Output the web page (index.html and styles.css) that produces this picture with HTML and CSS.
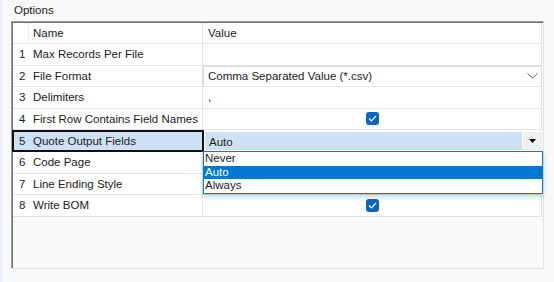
FILE: index.html
```html
<!DOCTYPE html>
<html>
<head>
    <title>Options</title>
    <link rel="stylesheet" href="styles.css">
</head>
<body>
    <div class="panel">
        <div class="caption">Options</div>
        <div class="grid">
            <div class="row head">
                <div class="num"></div>
                <div class="name">Name</div>
                <div class="value">Value</div>
            </div>
            <div class="row">
                <div class="num">1</div>
                <div class="name">Max Records Per File</div>
                <div class="value"></div>
            </div>
            <div class="row">
                <div class="num">2</div>
                <div class="name">File Format</div>
                <div class="value combo">
                    <span>Comma Separated Value (*.csv)</span>
                    <svg class="chevron" width="11" height="6" viewBox="0 0 11 6"><polyline points="0.5,0.5 5.5,5 10.5,0.5" fill="none" stroke="#606060" stroke-width="1"/></svg>
                </div>
            </div>
            <div class="row">
                <div class="num">3</div>
                <div class="name">Delimiters</div>
                <div class="value">,</div>
            </div>
            <div class="row">
                <div class="num">4</div>
                <div class="name">First Row Contains Field Names</div>
                <div class="value center"><span class="check"><svg width="9" height="7" viewBox="0 0 9 7"><polyline points="1,3.5 3.5,6 8,1" fill="none" stroke="#fff" stroke-width="1.2"/></svg></span></div>
            </div>
            <div class="row selected">
                <div class="sel">
                    <div class="num">5</div>
                    <div class="name">Quote Output Fields</div>
                </div>
                <div class="value editing">
                    <span class="edit-text">Auto</span>
                    <span class="drop-btn"><svg width="7" height="4" viewBox="0 0 7 4"><polygon points="0,0 7,0 3.5,4" fill="#000"/></svg></span>
                </div>
            </div>
            <div class="row">
                <div class="num">6</div>
                <div class="name">Code Page</div>
                <div class="value"></div>
            </div>
            <div class="row">
                <div class="num">7</div>
                <div class="name">Line Ending Style</div>
                <div class="value"></div>
            </div>
            <div class="row">
                <div class="num">8</div>
                <div class="name">Write BOM</div>
                <div class="value center"><span class="check"><svg width="9" height="7" viewBox="0 0 9 7"><polyline points="1,3.5 3.5,6 8,1" fill="none" stroke="#fff" stroke-width="1.2"/></svg></span></div>
            </div>

            <ul class="dropdown">
                <li>Never</li>
                <li class="active">Auto</li>
                <li>Always</li>
            </ul>
        </div>
    </div>
</body>
</html>
```

FILE: styles.css
```css
body {
    margin: 0;
    background-color: #f7f8fa;
    font-family: "Liberation Sans", Arial, sans-serif;
    font-size: 11.5px;
    color: #1b1b1b;
}
.panel {
    width: 554px;
    height: 282px;
    border-left: 3px solid #eef1f7;
    box-sizing: border-box;
}
.caption {
    height: 21px;
    line-height: 20px;
    padding-left: 11px;
    box-sizing: border-box;
}
.grid {
    position: relative;
    margin-left: 8px;
    width: 533px;
    height: 248px;
    box-sizing: border-box;
    border-top: 1px solid #a0a0a0;
    border-left: 1px solid #a0a0a0;
    border-right: 1px solid #e3e3e3;
    border-bottom: 1px solid #e3e3e3;
    box-shadow: inset 1px 1px 0 #696969;
    padding: 1px 1px 0 1px;
    background-color: #f8f9fb;
}
.row {
    display: flex;
    height: 21.5px;
    box-sizing: border-box;
    border-bottom: 1px solid #e2e2e2;
    background-color: #fff;
    white-space: nowrap;
}
.row.head {
    height: 21px;
}
.num {
    width: 16px;
    padding-left: 6px;
    box-sizing: border-box;
    display: flex;
    align-items: center;
}
.name {
    width: 174px;
    padding-left: 4px;
    box-sizing: border-box;
    border-right: 1px solid #e2e2e2;
    display: flex;
    align-items: center;
}
.head .num {
    border-right: 1px solid #ececec;
}
.value {
    flex: 1;
    padding-left: 5px;
    display: flex;
    align-items: center;
    box-sizing: border-box;
    border-right: 1px solid #e2e2e2;
}
.value.center {
    justify-content: center;
    padding-left: 0;
}
.combo {
    justify-content: space-between;
    border: 1px solid #dcdcdc;
    border-bottom: none;
    padding-left: 4px;
    padding-right: 3px;
}
.check {
    width: 13px;
    height: 13px;
    border-radius: 3px;
    background-color: #0a66c2;
    display: flex;
    align-items: center;
    justify-content: center;
    margin-left: 1px;
}
.row.selected {
    border-bottom: none;
    height: 22px;
}
.sel {
    display: flex;
    border: 2px solid #111;
    background-color: #cce1f5;
    margin-left: -1px;
}
.sel .num {
    width: 15px;
    padding-left: 5px;
}
.sel .name {
    width: 173px;
    padding-left: 4px;
    border-right: none;
}
.value.editing {
    padding: 2px 0 2px 1px;
    border-right: none;
    gap: 1px;
}
.edit-text {
    flex: 1;
    height: 100%;
    background-color: #cce1f5;
    display: flex;
    align-items: center;
    padding-left: 4px;
    padding-top: 2px;
    box-sizing: border-box;
}
.drop-btn {
    width: 19px;
    height: 100%;
    background-color: #f0f0f0;
    display: flex;
    align-items: center;
    justify-content: center;
}
.dropdown {
    position: absolute;
    top: 129px;
    left: 191px;
    width: 340px;
    margin: 0;
    padding: 0;
    list-style: none;
    background-color: #fff;
    border: 1px solid #0a78d7;
    box-sizing: border-box;
    box-shadow: 0 3px 5px rgba(0, 0, 0, 0.18);
}
.dropdown li {
    height: 13.5px;
    line-height: 13px;
    padding-left: 1px;
}
.dropdown li.active {
    background-color: #0078d7;
    color: #fff;
}
```
